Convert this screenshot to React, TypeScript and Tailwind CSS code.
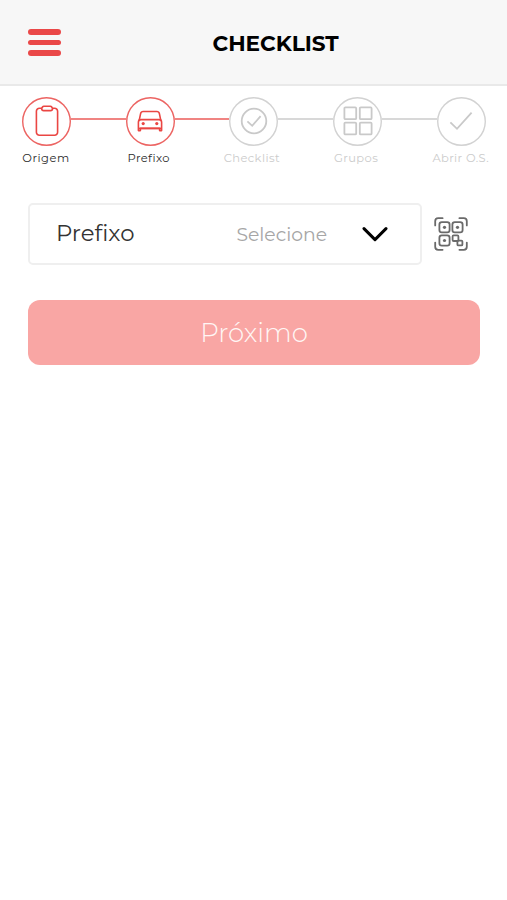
import { useState, type ReactNode } from 'react'
import { clsx } from 'clsx'

interface Step {
  label: string
  labelClass: string
  icon: ReactNode
}

function ClipboardIcon() {
  return (
    <svg width="24" height="32" viewBox="0 0 24 32" fill="none" stroke="currentColor" strokeWidth="1.6" strokeLinejoin="round">
      <path d="M7 3.2H4.4A3 3 0 0 0 1.4 6.2V27.2A3 3 0 0 0 4.4 30.2H19.6A3 3 0 0 0 22.6 27.2V6.2A3 3 0 0 0 19.6 3.2H17.4" />
      <path d="M8.8 1.2H15.4Q16.2 1.2 16.7 2L17.6 3.6Q17.4 5.6 15.6 5.6H8.6Q6.8 5.6 6.6 3.6L7.5 2Q8 1.2 8.8 1.2Z" />
    </svg>
  )
}

function CarIcon() {
  return (
    <svg width="26" height="22" viewBox="0 0 26 22" fill="none" stroke="currentColor" strokeWidth="1.6" strokeLinejoin="round">
      <path d="M2.2 10.4L3.6 3.6Q4.1 1.5 6.2 1.5H19.8Q21.9 1.5 22.4 3.6L23.8 10.4" />
      <path d="M1.4 20.6V12.2Q1.4 9.6 4 9.6H22Q24.6 9.6 24.6 12.2V20.6H22.6V18.4H3.4V20.6Z" />
      <path d="M1.4 18.4H24.6" />
      <circle cx="6.2" cy="13.6" r="1.6" fill="currentColor" stroke="none" />
      <circle cx="19.8" cy="13.6" r="1.6" fill="currentColor" stroke="none" />
    </svg>
  )
}

function CircleCheckIcon() {
  return (
    <svg width="28" height="28" viewBox="0 0 28 28" fill="none" stroke="currentColor" strokeWidth="1.8">
      <circle cx="14" cy="14" r="12.3" />
      <path d="M7.4 14.4L12.2 18.8L20.6 9.2" />
    </svg>
  )
}

function GridIcon() {
  return (
    <svg width="30" height="30" viewBox="0 0 30 30" fill="none" stroke="currentColor" strokeWidth="1.8">
      <rect x="1.4" y="1.4" width="11.8" height="11.8" rx="1" />
      <rect x="16.8" y="1.4" width="11.8" height="11.8" rx="1" />
      <rect x="1.4" y="16.6" width="11.8" height="11.8" rx="1" />
      <rect x="16.8" y="16.6" width="11.8" height="11.8" rx="1" />
    </svg>
  )
}

function CheckIcon() {
  return (
    <svg width="24" height="20" viewBox="0 0 24 20" fill="none" stroke="currentColor" strokeWidth="1.8">
      <path d="M1.4 11.4L8 17.8L22.6 1.6" />
    </svg>
  )
}

function QrIcon() {
  return (
    <svg width="34" height="34" viewBox="0 0 34 34" fill="none" stroke="currentColor" strokeWidth="1.8" strokeLinecap="round">
      <path d="M1.2 8.4V4.2Q1.2 1.2 4.2 1.2H8.6M25.4 1.2H29.8Q32.8 1.2 32.8 4.2V8.4M32.8 25.6V29.8Q32.8 32.8 29.8 32.8H25.4M8.6 32.8H4.2Q1.2 32.8 1.2 29.8V25.6" />
      <rect x="5.4" y="5.2" width="10.2" height="10.2" rx="2.4" />
      <rect x="18.4" y="5.2" width="10.2" height="10.2" rx="2.4" />
      <rect x="5.4" y="18.4" width="10.2" height="10.2" rx="2.4" />
      <rect x="18.6" y="18.4" width="5.8" height="5.6" rx="1" />
      <rect x="23.4" y="23.6" width="5" height="4.8" rx="1" />
      <g fill="currentColor" stroke="none">
        <circle cx="10.5" cy="10.3" r="1.6" />
        <circle cx="23.5" cy="10.3" r="1.6" />
        <circle cx="10.5" cy="23.5" r="1.6" />
      </g>
    </svg>
  )
}

const STEPS: Step[] = [
  { label: 'Origem', labelClass: 'tracking-[0.5px] -ml-px', icon: <ClipboardIcon /> },
  { label: 'Prefixo', labelClass: 'tracking-[0.4px] -ml-[3px]', icon: <CarIcon /> },
  { label: 'Checklist', labelClass: 'tracking-[0.4px] -ml-1', icon: <CircleCheckIcon /> },
  { label: 'Grupos', labelClass: 'tracking-[0.4px] -ml-[3px]', icon: <GridIcon /> },
  { label: 'Abrir O.S.', labelClass: 'tracking-[0.35px] -ml-px', icon: <CheckIcon /> },
]

function Stepper({ current }: { current: number }) {
  return (
    <ol className="flex pl-[22px] pt-[10.5px]">
      {STEPS.map((step, i) => (
        <li key={step.label} className="flex w-[103.7px] shrink-0 flex-col">
          <div className="flex items-center">
            <div
              className={clsx(
                'flex size-[49px] shrink-0 items-center justify-center rounded-full shadow-[inset_0_0_0_1.4px]',
                i <= current ? 'shadow-[#ec6462] text-[#ea4643]' : 'shadow-[#d2d2d2] text-[#c9c9c9]',
              )}
            >
              {step.icon}
            </div>
            {i < STEPS.length - 1 ? (
              <div className={clsx('mb-[4px] h-[2px] flex-1', i <= current ? 'bg-[#f08482]' : 'bg-[#d8d8d8]')} />
            ) : null}
          </div>
          <div className="mt-[4.5px] flex w-[49px] justify-center">
            <span
              className={clsx(
                'whitespace-nowrap text-[11.5px] leading-[16px]',
                step.labelClass,
                i <= current ? 'text-[#2b2b2b]' : 'text-[#cbcbcb]',
              )}
            >
              {step.label}
            </span>
          </div>
        </li>
      ))}
    </ol>
  )
}

export default function App() {
  const [current] = useState(1)

  return (
    <div className="min-h-[900px] w-[507px] overflow-hidden bg-white font-['Montserrat','Inter',sans-serif]">
      <header className="flex h-[86px] items-center border-b-2 border-[#e9e9e9] bg-[#f7f7f7] pl-7">
        <button type="button" aria-label="Menu" className="flex w-[32.5px] flex-col gap-[5px] pt-[1px]">
          <span className="h-[5.7px] rounded-full bg-[#ea4848]" />
          <span className="h-[5.7px] rounded-full bg-[#ea4848]" />
          <span className="h-[5.7px] rounded-full bg-[#ea4848]" />
        </button>
        <h1 className="ml-[152px] pt-[1px] text-[21.6px] font-bold leading-7 text-black">CHECKLIST</h1>
      </header>

      <Stepper current={current} />

      <main className="px-7 pt-[37px]">
        <div className="flex items-center">
          <button
            type="button"
            className="flex h-[62px] w-[394px] items-center rounded-[5px] border-2 border-[#efefef] pl-[26px] pr-[32px]"
          >
            <span className="pb-[2px] text-[22.8px] leading-7 text-[#333333]">Prefixo</span>
            <span className="ml-auto pt-[1px] text-[18.8px] leading-7 text-[#a6a6a6]">Selecione</span>
            <svg width="26" height="16" viewBox="0 0 26 16" fill="none" className="ml-[35px]">
              <path d="M2 2.6L13 13.6L24 2.6" stroke="#000000" strokeWidth="3" strokeLinecap="round" strokeLinejoin="round" />
            </svg>
          </button>
          <button type="button" aria-label="QR code" className="ml-3 text-[#6a6a6a]">
            <QrIcon />
          </button>
        </div>

        <button
          type="button"
          disabled
          className="mt-[35px] flex h-[65px] w-[452px] items-center justify-center rounded-xl bg-[#f9a6a4] text-[26px] font-[350] leading-8 text-[#fff6f5]"
        >
          Próximo
        </button>
      </main>
    </div>
  )
}
